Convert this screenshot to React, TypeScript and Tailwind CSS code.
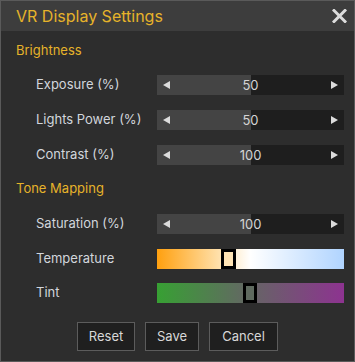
import React from "react";

const font = { fontFamily: 'Inter, "Open Sans", "Liberation Sans", sans-serif' };

function Spinner({ value }: { value: string }) {
  return (
    <div className="relative h-[20px] w-[187px] bg-[#1e1e1e]">
      <div className="absolute left-0 top-0 h-full w-[94px] bg-[#444444]" />
      <div className="relative flex h-full items-center justify-between px-[6px]">
        <svg width="7" height="8" viewBox="0 0 7 8"><path d="M7 0 L0 4 L7 8 Z" fill="#dcdcdc" /></svg>
        <span className="text-[13px] leading-none text-[#d4d4d4]">{value}</span>
        <svg width="7" height="8" viewBox="0 0 7 8"><path d="M0 0 L7 4 L0 8 Z" fill="#dcdcdc" /></svg>
      </div>
    </div>
  );
}

function Row({ label, children, className }: { label: string; children: React.ReactNode; className?: string }) {
  return (
    <div className={"flex h-[20px] items-center " + (className ?? "")}>
      <div className="w-[141px] pl-[20px] text-[13px] text-[#d2d6dc]">{label}</div>
      {children}
    </div>
  );
}

export default function App() {
  return (
    <div className="h-[362px] w-[355px] overflow-hidden border border-[#5a5a5a] bg-[#2d2d2d]" style={font}>
      <div className="flex h-[30px] items-center justify-between bg-[#3d3d3d] pl-[15px] pr-[7px]">
        <span className="text-[16px] text-[#e6b32a]">VR Display Settings</span>
        <svg width="15" height="14" viewBox="0 0 15 14">
          <path d="M2 1.5 L13 12.5 M13 1.5 L2 12.5" stroke="#dcdcdc" strokeWidth="3" strokeLinecap="square" />
        </svg>
      </div>
      <div className="pl-[15px] pt-[9px]">
        <div className="h-[20px] text-[13px] leading-[20px] text-[#e6b32a]">Brightness</div>
        <Row label="Exposure (%)" className="mt-[15px]"><Spinner value="50" /></Row>
        <Row label="Lights Power (%)" className="mt-[15px]"><Spinner value="50" /></Row>
        <Row label="Contrast (%)" className="mt-[15px]"><Spinner value="100" /></Row>
        <div className="mt-[13px] h-[20px] text-[13px] leading-[20px] text-[#e6b32a]">Tone Mapping</div>
        <Row label="Saturation (%)" className="mt-[16px]"><Spinner value="100" /></Row>
        <Row label="Temperature" className="mt-[15px]">
          <div className="relative h-[20px] w-[187px] bg-[linear-gradient(to_right,#ffa00f_0%,#ffe4b4_35%,#ffffff_50%,#b0d4ff_100%)]">
            <div className="absolute left-[64px] top-0 h-[20px] w-[15px] border-[3px] border-black bg-[#ffe4b4]" />
          </div>
        </Row>
        <Row label="Tint" className="mt-[14px]">
          <div className="relative h-[20px] w-[187px] bg-[linear-gradient(to_right,#37a033_0%,#656565_50%,#8d3390_100%)]">
            <div className="absolute left-[86px] top-0 h-[20px] w-[14px] border-[3px] border-black bg-[#5f6a5f]" />
          </div>
        </Row>
      </div>
      <div className="mt-[19px] flex justify-center gap-[10px]">
        <button className="h-[29px] w-[58px] border border-[#5c5c5c] bg-[#1f1f1f] text-[13px] text-[#d8d8d8]">Reset</button>
        <button className="h-[29px] w-[54px] border border-[#5c5c5c] bg-[#1f1f1f] text-[13px] text-[#d8d8d8]">Save</button>
        <button className="h-[29px] w-[69px] border border-[#5c5c5c] bg-[#1f1f1f] text-[13px] text-[#d8d8d8]">Cancel</button>
      </div>
    </div>
  );
}
